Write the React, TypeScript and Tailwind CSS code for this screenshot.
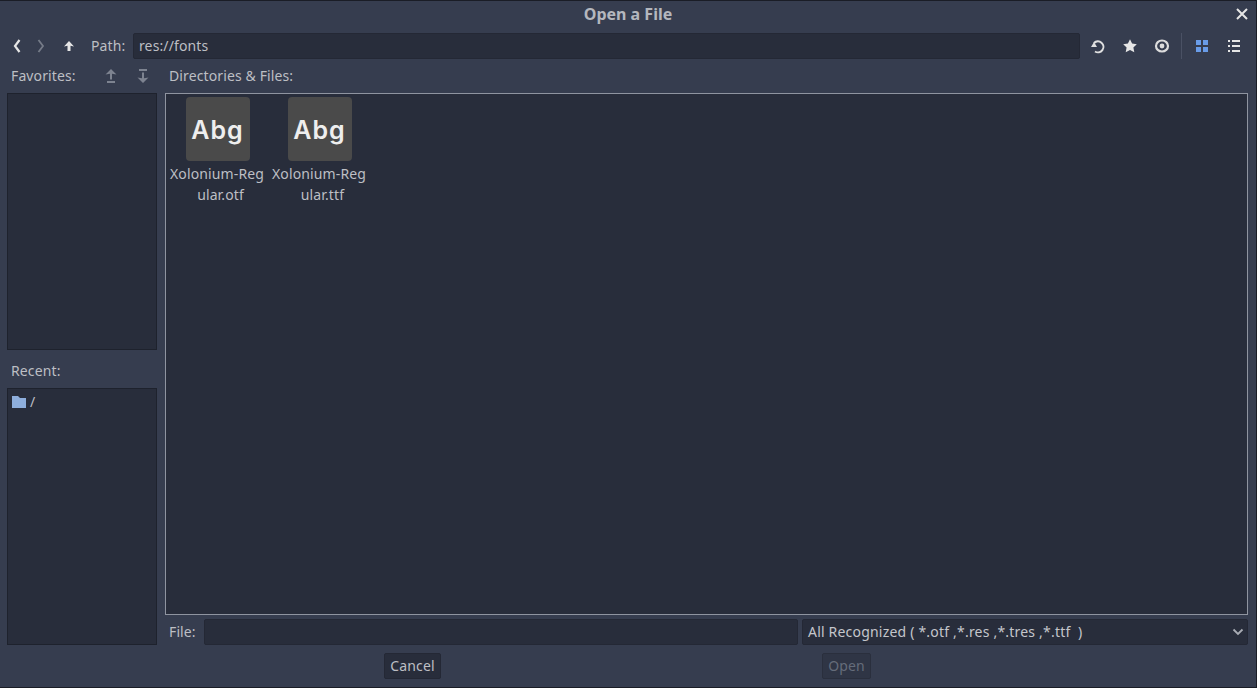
import { ReactNode } from 'react'

const files = [
  { first: 'Xolonium-Reg', second: 'ular.otf' },
  { first: 'Xolonium-Reg', second: 'ular.ttf' }
]

function ToolButton({ children }: { children: ReactNode }) {
  return <div className="w-8 h-[26px] flex items-center justify-center shrink-0">{children}</div>
}

function FileItem({ first, second }: { first: string; second: string }) {
  return (
    <div className="w-[102px] flex flex-col items-center">
      <div className="w-16 h-16 ml-[1px] bg-[#4a4a4a] rounded flex items-center justify-center">
        <span className="font-['Inter'] font-semibold text-[25px] tracking-[1px] leading-none text-[#eeeeee] pt-[3px]">Abg</span>
      </div>
      <div className="mt-[2px] w-full text-center leading-[21px] text-[#bdbfc4] whitespace-nowrap">
        <div>{first}</div>
        <div className="pl-[7px]">{second}</div>
      </div>
    </div>
  )
}

export default function App() {
  return (
    <div className="w-[1257px] h-[688px] overflow-hidden flex flex-col bg-[#363d4f] border-t border-b border-r border-[#1a1d26] font-['Noto_Sans',sans-serif] text-[14px] tracking-[0.12px] text-[#bdbfc4]">
      {/* title */}
      <div className="h-[27px] relative flex items-center justify-center shrink-0">
        <span className="font-bold text-[16px] tracking-normal text-[#b4b7be] pb-[2px]">Open a File</span>
        <svg viewBox="0 0 12 12" className="absolute right-[8px] top-[7px] w-3 h-3 text-[#e6e6e6]" stroke="currentColor" strokeWidth="2">
          <path d="M1 1L11 11M11 1L1 11" />
        </svg>
      </div>

      {/* toolbar */}
      <div className="mt-[5px] h-[26px] flex items-center shrink-0">
        <div className="w-[33px] flex justify-end pr-[12px]">
          <svg viewBox="0 0 8 14" className="w-2 h-[14px] text-[#e6e6e6]" fill="none" stroke="currentColor" strokeWidth="2.200">
            <path d="M6.500 1L2 7L6.500 13" />
          </svg>
        </div>
        <div className="w-4 flex justify-center">
          <svg viewBox="0 0 8 14" className="w-2 h-[14px] text-[#757b88]" fill="none" stroke="currentColor" strokeWidth="1.800">
            <path d="M1.500 1L6 7L1.500 13" />
          </svg>
        </div>
        <div className="w-10 flex justify-center">
          <svg viewBox="0 0 12 12" className="w-3 h-3 text-[#e6e6e6]" fill="currentColor">
            <path d="M6 1L11 6.500L7.500 5.800V11H4.500V5.800L1 6.500Z" />
          </svg>
        </div>
        <span className="ml-[2px] w-[42px] pb-[2px]">Path:</span>
        <div className="w-[947px] h-[26px] px-[5px] pb-[2px] flex items-center bg-[#282d3b] border border-[#242835] rounded-[2px] shrink-0">
          res://fonts
        </div>
        <div className="ml-[2px] flex items-center">
          <ToolButton>
            <svg viewBox="0 0 16 16" className="w-4 h-4 text-[#e0e0e0]" fill="none" stroke="currentColor">
              <path d="M5 13.500A5.500 5.500 0 1 0 4 5" strokeWidth="2" />
              <path d="M1 9H7L4 4Z" fill="currentColor" stroke="none" />
            </svg>
          </ToolButton>
          <ToolButton>
            <svg viewBox="0 0 16 16" className="w-4 h-4 text-[#e6e6e6]" fill="currentColor">
              <path d="M8 1.200L10.100 5.600L14.800 6.200L11.400 9.500L12.300 14.200L8 11.900L3.700 14.200L4.600 9.500L1.200 6.200L5.900 5.600Z" />
            </svg>
          </ToolButton>
          <ToolButton>
            <svg viewBox="0 0 16 16" className="w-4 h-4 text-[#dcdcdc]" fill="none" stroke="currentColor" strokeWidth="2.200">
              <ellipse cx="8" cy="8" rx="6" ry="5.500" />
              <circle cx="8" cy="8" r="2.400" fill="currentColor" stroke="none" />
            </svg>
          </ToolButton>
          <div className="w-[1px] h-[26px] ml-[3px] mr-[4px] bg-[#4a5164]" />
          <ToolButton>
            <svg viewBox="0 0 12 12" className="w-3 h-3" fill="#699ce8">
              <rect x="0" y="0" width="5" height="5" />
              <rect x="7" y="0" width="5" height="5" />
              <rect x="0" y="7" width="5" height="5" />
              <rect x="7" y="7" width="5" height="5" />
            </svg>
          </ToolButton>
          <ToolButton>
            <svg viewBox="0 0 12 12" className="w-3 h-3" fill="#e6e6e6">
              <rect x="0" y="0" width="2" height="2" />
              <rect x="4" y="0" width="8" height="2" />
              <rect x="0" y="5" width="2" height="2" />
              <rect x="4" y="5" width="8" height="2" />
              <rect x="0" y="10" width="2" height="2" />
              <rect x="4" y="10" width="8" height="2" />
            </svg>
          </ToolButton>
        </div>
      </div>

      {/* body */}
      <div className="mt-[7px] h-[579px] flex shrink-0">
        <div className="w-[150px] ml-[7px] flex flex-col shrink-0">
          <div className="h-[27px] flex items-center pl-[4px] pb-[9px] relative">
            <span>Favorites:</span>
            <svg viewBox="0 0 12 14" className="absolute left-[98px] top-[3px] w-3 h-[14px] text-[#7d8390]" fill="currentColor">
              <path d="M6 0L11.500 5.500L7 4.800V10.500H5V4.800L0.500 5.500Z" />
              <rect x="2" y="12" width="8" height="2" />
            </svg>
            <svg viewBox="0 0 12 14" className="absolute left-[130px] top-[3px] w-3 h-[14px] text-[#7d8390]" fill="currentColor">
              <path d="M6 14L11.500 8.500L7 9.200V3.500H5V9.200L0.500 8.500Z" />
              <rect x="2" y="0" width="8" height="2" />
            </svg>
          </div>
          <div className="h-[257px] bg-[#282d3b] border border-[#1e222d]" />
          <div className="h-[38px] flex items-center pl-[4px] pt-[3px]">Recent:</div>
          <div className="h-[257px] bg-[#282d3b] border border-[#1e222d] pl-[4px] pt-[2px] flex items-start gap-[4px]">
            <svg viewBox="0 0 14 12" className="w-[14px] h-3 mt-[5px] text-[#8eaedc]" fill="currentColor">
              <path d="M0 0H6L8 2H14V12H0Z" />
            </svg>
            <span className="leading-[21px]">/</span>
          </div>
        </div>

        <div className="ml-[8px] w-[1083px] flex flex-col shrink-0">
          <div className="h-[27px] flex items-center pl-[4px] pb-[9px]">Directories &amp; Files:</div>
          <div className="h-[522px] bg-[#282d3b] border border-[#8f94a0] pt-[3px] flex items-start">
            <FileItem first={files[0].first} second={files[0].second} />
            <FileItem first={files[1].first} second={files[1].second} />
          </div>
          <div className="mt-[4px] h-[26px] flex items-center">
            <span className="pl-[4px] w-[39px] pb-[2px]">File:</span>
            <div className="w-[594px] h-[26px] bg-[#282d3b] border border-[#242835] rounded-[2px]" />
            <div className="ml-[4px] w-[446px] h-[26px] pl-[5px] pr-[3px] flex items-center justify-between bg-[#282d3b] border border-[#242835] rounded-[2px] text-[#c4c6cb] whitespace-pre">
              <span className="pb-[2px] tracking-[0.2px]">All Recognized ( *.otf ,*.res ,*.tres ,*.ttf  )</span>
              <svg viewBox="0 0 12 8" className="w-3 h-2 text-[#a9acb4]" fill="none" stroke="currentColor" strokeWidth="1.800">
                <path d="M1.500 1.500L6 6L10.500 1.500" />
              </svg>
            </div>
          </div>
        </div>
      </div>

      {/* buttons */}
      <div className="mt-[8px] h-[26px] flex items-center shrink-0">
        <button className="ml-[384px] w-[57px] h-[26px] pb-[2px] flex items-center justify-center bg-[#282d3b] border border-[#242835] rounded-[2px] text-[#bdbfc4]">
          Cancel
        </button>
        <button className="ml-[381px] w-[49px] h-[26px] pb-[2px] flex items-center justify-center bg-[#2f3545] border border-[#2a2f3d] rounded-[2px] text-[#656c7a]">
          Open
        </button>
      </div>
    </div>
  )
}
